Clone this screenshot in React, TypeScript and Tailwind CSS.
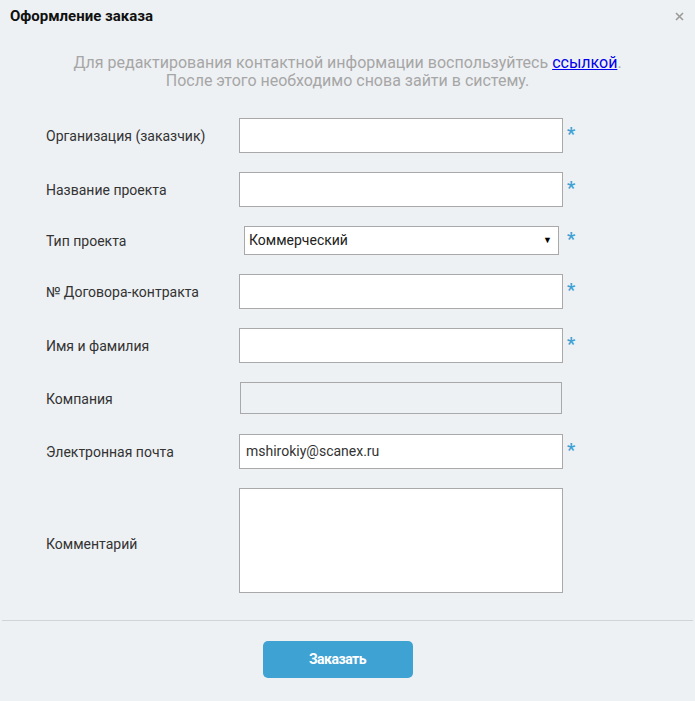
import React from "react";

const ROWS = [
  { label: "Организация (заказчик)", kind: "input", required: true },
  { label: "Название проекта", kind: "input", required: true },
  { label: "Тип проекта", kind: "select", required: true },
  { label: "№ Договора-контракта", kind: "input", required: true },
  { label: "Имя и фамилия", kind: "input", required: true },
  { label: "Компания", kind: "disabled", required: false },
  { label: "Электронная почта", kind: "email", required: true },
  { label: "Комментарий", kind: "textarea", required: false },
];

function Field({ kind }: { kind: string }) {
  if (kind === "select") {
    return (
      <div className="ml-[5px] flex h-[29px] w-[315px] items-center justify-between border border-[#a9a9a9] bg-white pl-[4px] pr-[6px] text-[14px] text-[#222]">
        <span>Коммерческий</span>
        <span className="text-[9px] leading-none text-black">▼</span>
      </div>
    );
  }
  if (kind === "disabled") {
    return (
      <div className="mb-px ml-px h-[32px] w-[322px] border border-[#a9a9a9] bg-[#eef1f4]" />
    );
  }
  if (kind === "email") {
    return (
      <div className="flex h-[35px] w-[324px] items-center border border-[#a9a9a9] bg-white px-[6px] text-[14px] text-[#333]">
        mshirokiy@scanex.ru
      </div>
    );
  }
  if (kind === "textarea") {
    return <div className="h-[105px] w-[324px] border border-[#a9a9a9] bg-white" />;
  }
  return <div className="h-[35px] w-[324px] border border-[#a9a9a9] bg-white" />;
}

export default function App() {
  return (
    <div
      className="flex h-[701px] w-[695px] flex-col bg-[#eef1f4] text-[#333]"
      style={{ fontFamily: "Roboto, 'Liberation Sans', sans-serif" }}
    >
      {/* header */}
      <div className="flex items-center justify-between pl-[10px] pr-[11px] pt-[6px]">
        <h1 className="text-[15px] font-bold leading-[20px] text-[#111]">Оформление заказа</h1>
        <svg width="9" height="9" viewBox="0 0 9 9" className="mt-px">
          <path d="M1 1L8 8M8 1L1 8" stroke="#9a9a9a" strokeWidth="1.6" />
        </svg>
      </div>

      {/* notice */}
      <p className="mt-[28px] text-center text-[16px] leading-[18px] text-[#a6a6a6]">
        Для редактирования контактной информации воспользуйтесь{" "}
        <a className="text-[#0000ee] underline">ссылкой</a>.
        <br />
        После этого необходимо снова зайти в систему.
      </p>

      {/* form */}
      <div className="mt-[28px] flex flex-col gap-[19px] pl-[46px]">
        {ROWS.map((r) => (
          <div key={r.label} className="flex items-center">
            <div
              className={`w-[193px] text-[14px] leading-[16px] text-[#333] ${
                r.kind === "textarea" ? "mt-[6px]" : ""
              }`}
            >
              {r.label}
            </div>
            <div className="w-[324px]">
              <Field kind={r.kind} />
            </div>
            {r.required && (
              <span className="mb-[3px] ml-[4px] text-[18px] font-bold leading-none text-[#3ea1d3]">*</span>
            )}
          </div>
        ))}
      </div>

      {/* footer */}
      <div className="mx-[2px] mt-[27px] border-t border-[#cfd4d8]" />
      <div className="flex justify-center pr-[20px] pt-[20px]">
        <button
          type="button"
          className="h-[37px] w-[150px] rounded-[5px] bg-[#3ea2d3] text-[14px] font-bold tracking-[-0.5px] text-white"
        >
          Заказать
        </button>
      </div>
    </div>
  );
}
